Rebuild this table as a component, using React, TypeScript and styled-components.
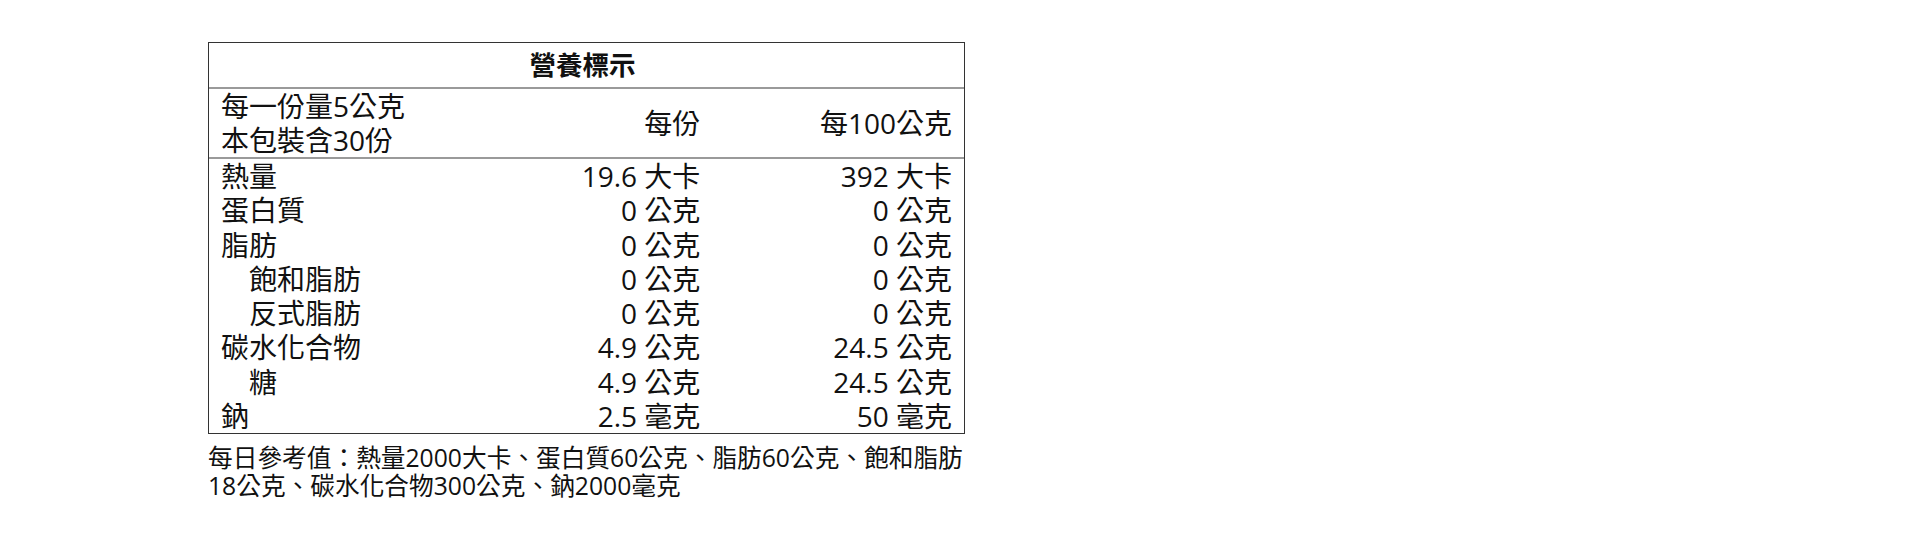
import styled, { createGlobalStyle } from "styled-components";

const GlobalStyle = createGlobalStyle`
  body {
    margin: 0;
    background: #fff;
    color: #111;
    font-family: "Open Sans", "Noto Sans CJK TC", sans-serif;
  }
`;

const Page = styled.div`
  padding: 42px 0 0 208px;
`;

const Label = styled.div`
  width: 757px;
`;

const Table = styled.table`
  width: 757px;
  table-layout: fixed;
  border-collapse: separate;
  border-spacing: 0;
  border: 1px solid #333;
  font-size: 28px;
  line-height: 34px;
`;

const Title = styled.th`
  height: 44px;
  padding: 0 8px 0 0;
  font-weight: bold;
  font-size: 26.5px;
  text-align: center;
  border-bottom: 2px solid #9a9a9a;
`;

const Cell = styled.td<{ $head?: boolean; $indent?: boolean; $num?: boolean }>`
  padding: 0 12px 0 ${(p) => (p.$indent ? "40px" : "12px")};
  text-align: ${(p) => (p.$num ? "right" : "left")};
  white-space: nowrap;
  font-weight: normal;
  vertical-align: middle;
  border-bottom: ${(p) => (p.$head ? "2px solid #9a9a9a" : "none")};
`;

const Row = styled.tr`
  height: 34.25px;
`;

const Note = styled.p`
  margin: 10px 0 0;
  font-size: 24.7px;
  line-height: 28px;
`;

const rows: { name: string; per: string; per100: string; indent?: boolean }[] = [
  { name: "熱量", per: "19.6 大卡", per100: "392 大卡" },
  { name: "蛋白質", per: "0 公克", per100: "0 公克" },
  { name: "脂肪", per: "0 公克", per100: "0 公克" },
  { name: "飽和脂肪", per: "0 公克", per100: "0 公克", indent: true },
  { name: "反式脂肪", per: "0 公克", per100: "0 公克", indent: true },
  { name: "碳水化合物", per: "4.9 公克", per100: "24.5 公克" },
  { name: "糖", per: "4.9 公克", per100: "24.5 公克", indent: true },
  { name: "鈉", per: "2.5 毫克", per100: "50 毫克" },
];

export default function App() {
  return (
    <Page>
      <GlobalStyle />
      <Label>
        <Table>
          <thead>
            <tr>
              <Title colSpan={3}>營養標示</Title>
            </tr>
          </thead>
          <tbody>
            <tr>
              <Cell $head>
                每一份量5公克
                <br />
                本包裝含30份
              </Cell>
              <Cell $head $num>
                每份
              </Cell>
              <Cell $head $num>
                每100公克
              </Cell>
            </tr>
            {rows.map((r) => (
              <Row key={r.name}>
                <Cell $indent={r.indent}>{r.name}</Cell>
                <Cell $num>{r.per}</Cell>
                <Cell $num>{r.per100}</Cell>
              </Row>
            ))}
          </tbody>
        </Table>
        <Note>
          每日參考值：熱量2000大卡、蛋白質60公克、脂肪60公克、飽和脂肪18公克、碳水化合物300公克、鈉2000毫克
        </Note>
      </Label>
    </Page>
  );
}
